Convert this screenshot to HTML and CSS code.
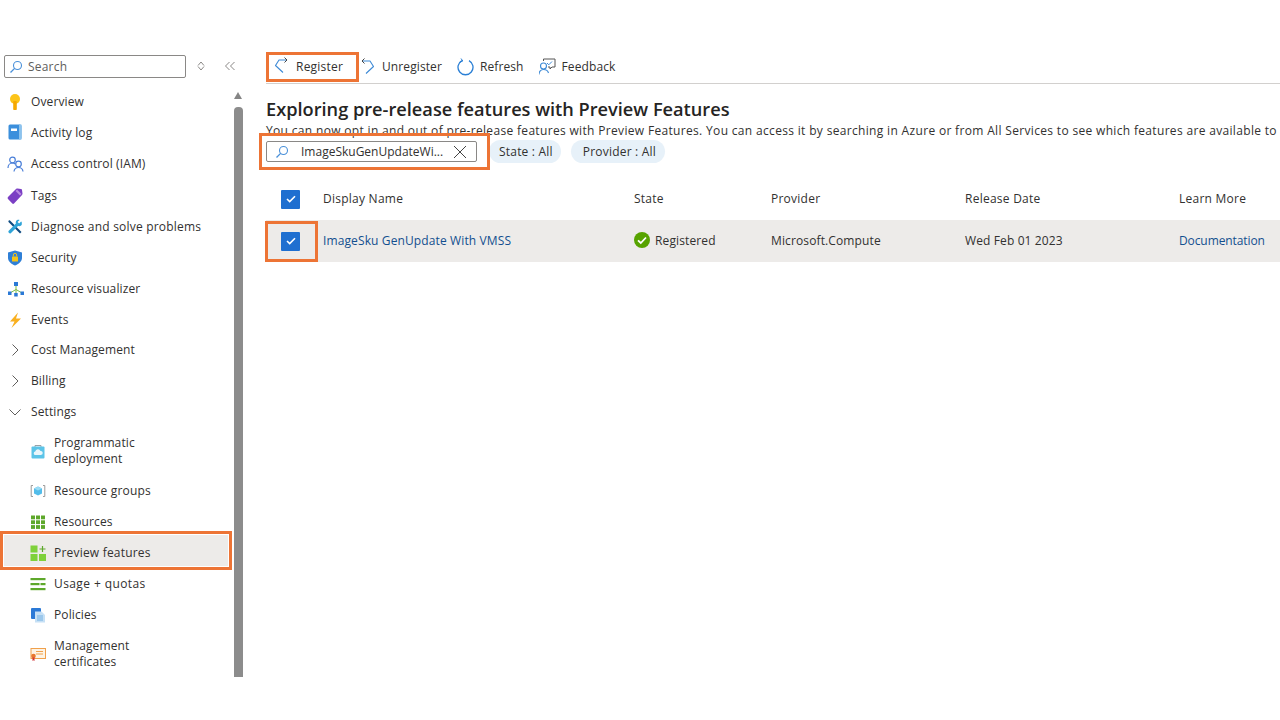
FILE: index.html
```html
<!DOCTYPE html>
<html lang="en">
<head>
<meta charset="utf-8">
<title>Preview features</title>
<link rel="stylesheet" href="styles.css">
</head>
<body>
<div class="page">
  <aside class="sidebar">
    <div class="side-list">
      <div class="side-top">
        <div class="side-search">
          <svg class="i14" viewBox="0 0 14 14"><circle cx="8.5" cy="5.5" r="4" fill="none" stroke="#4a90d9" stroke-width="1.1"/><path d="M5.6 8.4 1.5 12.5" stroke="#4a90d9" stroke-width="1.3"/></svg>
          <span>Search</span>
        </div>
        <svg class="updown" viewBox="0 0 10 12"><path d="M5 2 8 5.500 M5 2 2 5.500M5 10 8 6.500M5 10 2 6.500" fill="none" stroke="#8a8886" stroke-width="1"/></svg>
        <svg class="collapse" viewBox="0 0 12 10"><path d="M5.500 1 1.500 5l4 4M10.500 1l-4 4 4 4" fill="none" stroke="#8a8886" stroke-width="1"/></svg>
      </div>
      <nav class="menu">
        <a class="item"><svg class="ico" viewBox="0 0 16 16"><circle cx="8" cy="5" r="5" fill="#fcc419"/><rect x="6.200" y="7" width="3.600" height="9" rx=".8" fill="#f5a800"/></svg>Overview</a>
        <a class="item"><svg class="ico big" viewBox="0 0 16 16"><rect x="1.500" y="0.500" width="13" height="15" rx="1.500" fill="#3b8fdc"/><rect x="12" y="0.500" width="2.500" height="15" fill="#8cc3ee"/><rect x="4" y="4.500" width="6" height="2.500" fill="#fff"/></svg>Activity log</a>
        <a class="item"><svg class="ico ico-l" viewBox="0 0 18 16"><circle cx="5.500" cy="4" r="2.800" fill="none" stroke="#4a7fd8" stroke-width="1.200"/><path d="M1 12c0-3 2-5 4.500-5 1 0 2 .3 2.700 1" fill="none" stroke="#4a7fd8" stroke-width="1.200"/><circle cx="11.500" cy="8" r="2.800" fill="none" stroke="#4a7fd8" stroke-width="1.200"/><path d="M7 15.500c.3-2.500 2-4 4.500-4s4.200 1.500 4.500 4" fill="none" stroke="#4a7fd8" stroke-width="1.200"/></svg>Access control (IAM)</a>
        <a class="item nudge"><svg class="ico" viewBox="0 0 16 16"><path d="M1 9 9 1c.5-.4 1-.5 1.500-.5l3.500.5c.6.1 1 .5 1 1.100l.5 3.500c0 .6-.1 1-.5 1.400L7 15.500c-.5.500-1.200.500-1.700 0L1 11c-.5-.5-.5-1.500 0-2z" fill="#7b3fc4"/><path d="M10 1.500l4.500 4.500-1.500 1.500-4.500-4.500z" fill="#b98ae0"/></svg>Tags</a>
        <a class="item nudge wide"><svg class="ico" viewBox="0 0 16 16"><path d="M3 1.500 14.500 13 13 14.500 1.500 3c-.5-1 .5-2 1.500-1.500z" fill="#0f4c81"/><path d="M14.800 3.500c-.2-.6-.4-.8-.7-.9l-2 2-1.500-1.500 2-2c-1.500-.6-3 0-3.600 1.200-.4.800-.3 1.500-.1 2.200L1.500 12c-.5.800.2 2.500 2 2.500L11 7c1.800.5 3.300-.2 3.800-1.500z" fill="#2fa4d8"/></svg>Diagnose and solve problems</a>
        <a class="item nudge"><svg class="ico" viewBox="0 0 16 16"><path d="M8 .5 15 2.500V8c0 3.500-3.500 6-7 7.500C4.500 14 1 11.500 1 8V2.500z" fill="#2f7fd6"/><rect x="5" y="6.500" width="6" height="5" rx=".6" fill="#f5c518"/><path d="M6.300 6.500V5a1.700 1.700 0 0 1 3.400 0v1.500" fill="none" stroke="#f5c518" stroke-width="1"/></svg>Security</a>
        <a class="item nudge"><svg class="ico ico-l" viewBox="0 0 18 16"><path d="M9 5v8M9 8.500 3 12M9 8.500l6 3.500" stroke="#7cbb42" stroke-width="1" fill="none"/><rect x="7" y="1" width="4" height="4" fill="#2b79d6"/><rect x="1" y="10.500" width="3.500" height="3.500" fill="#2b79d6"/><rect x="7.200" y="12" width="3.500" height="3.500" fill="#2b79d6"/><rect x="13.500" y="10.500" width="3.500" height="3.500" fill="#2b79d6"/></svg>Resource visualizer</a>
        <a class="item nudge"><svg class="ico" viewBox="0 0 16 16"><path d="M11 .5 3 9.500h4.500L4.500 16 14 6.500H9z" fill="#f9b020"/></svg>Events</a>
        <a class="item"><svg class="ico chev" viewBox="0 0 16 16"><path d="M5.500 2.500 11 8l-5.500 5.500" fill="none" stroke="#605e5c" stroke-width="1"/></svg>Cost Management</a>
        <a class="item"><svg class="ico chev" viewBox="0 0 16 16"><path d="M5.500 2.500 11 8l-5.500 5.500" fill="none" stroke="#605e5c" stroke-width="1"/></svg>Billing</a>
        <a class="item"><svg class="ico chev" viewBox="0 0 16 16"><path d="M2.500 5.500 8 11l5.500-5.500" fill="none" stroke="#605e5c" stroke-width="1"/></svg>Settings</a>
        <a class="item sub two"><svg class="ico" viewBox="0 0 16 16"><path d="M5 4V2.500h6V4" fill="none" stroke="#9aa0a6" stroke-width="1"/><rect x="1.500" y="3.500" width="13" height="12" rx="1" fill="#5cc4e8"/><path d="M5 12a1.800 1.800 0 0 1 .2-3.500A2.800 2.800 0 0 1 10.500 8a2 2 0 0 1 .5 4z" fill="#eaf6fb"/></svg><span>Programmatic<br>deployment</span></a>
        <a class="item sub wide"><svg class="ico" viewBox="0 0 16 16"><path d="M3 2.500H1.200v11H3M13 2.500h1.800v11H13" fill="none" stroke="#9a9a9a" stroke-width="1"/><path d="M8 3.500 12 5.500v5L8 12.500l-4-2v-5z" fill="#53bdea"/><path d="M8 3.500 12 5.500 8 7.500 4 5.500z" fill="#9adcf5"/></svg>Resource groups</a>
        <a class="item sub"><svg class="ico" viewBox="0 0 16 16"><g fill="#5ea82b"><rect x="1" y="1.500" width="4" height="3.800"/><rect x="6" y="1.500" width="4" height="3.800"/><rect x="11" y="1.500" width="4" height="3.800"/><rect x="1" y="6.300" width="4" height="3.800"/><rect x="6" y="6.300" width="4" height="3.800"/><rect x="11" y="6.300" width="4" height="3.800"/><rect x="1" y="11.100" width="4" height="3.800"/><rect x="6" y="11.100" width="4" height="3.800"/><rect x="11" y="11.100" width="4" height="3.800"/></g></svg>Resources</a>
        <a class="item sub wide selected"><svg class="ico" viewBox="0 0 16 16"><g fill="#7fd13b"><rect x="0.500" y="0.500" width="7" height="7"/><rect x="0.500" y="9" width="7" height="7"/><rect x="9" y="9" width="7" height="7"/></g><path d="M12.500 1v6M9.500 4h6" stroke="#5ea82b" stroke-width="1.200"/></svg>Preview features</a>
        <a class="item sub wider"><svg class="ico" viewBox="0 0 16 16"><g fill="#5ea82b"><rect x="0.500" y="2" width="15" height="2.200"/><rect x="0.500" y="7" width="9" height="2.200"/><rect x="10.500" y="7" width="5" height="2.200"/><rect x="0.500" y="12" width="15" height="2.200"/></g></svg>Usage + quotas</a>
        <a class="item sub"><svg class="ico" viewBox="0 0 16 16"><rect x="1" y="1" width="10" height="11" rx="1" fill="#2b79d6"/><path d="M5 4.500h6.500L15 8v7.500H5z" fill="#c6e0f5"/><path d="M7 9h6M7 11h6M7 13h6" stroke="#5ea4de" stroke-width=".8"/></svg>Policies</a>
        <a class="item sub two"><svg class="ico" viewBox="0 0 16 16"><rect x="1" y="2.500" width="14.500" height="10" fill="#fdf3e4" stroke="#f0a04b" stroke-width="1"/><path d="M6 5.500h7M6 8h7" stroke="#f0a04b" stroke-width="1"/><circle cx="3.500" cy="10" r="2.300" fill="#e8772e"/><path d="M2.500 11.500v3.500l1-.8 1 .8v-3.500" fill="#d13438"/></svg><span>Management<br>certificates</span></a>
      </nav>
    </div>
    <div class="scrollbar">
      <div class="arrow"></div>
      <div class="thumb"></div>
    </div>
  </aside>
  <main class="main">
    <div class="toolbar">
      <button class="cmd first"><svg class="i18" viewBox="0 0 18 18"><path d="M12.500 3H5L1.500 8.500 9 15.500" fill="none" stroke="#3d8ad6" stroke-width="1.100" stroke-linejoin="round"/><path d="M10.500 .5 13 3l-2.500 2.500" fill="none" stroke="#444" stroke-width="1"/></svg>Register</button>
      <button class="cmd"><svg class="i18" viewBox="0 0 18 18"><path d="M3.500 3H11l3.500 5.500L7 15.500" fill="none" stroke="#3d8ad6" stroke-width="1.100" stroke-linejoin="round"/><path d="M5.500 .5 3 3l2.500 2.500" fill="none" stroke="#444" stroke-width="1"/></svg>Unregister</button>
      <button class="cmd"><svg class="i18" viewBox="0 0 18 18"><path d="M5 2.600A7.500 7.500 0 1 0 12 2.600" fill="none" stroke="#2a7fd5" stroke-width="1.300"/><path d="M4 .5l1.800 2.500-2.800 1" fill="none" stroke="#2a7fd5" stroke-width="1"/></svg>Refresh</button>
      <button class="cmd"><svg class="i18" viewBox="0 0 18 18"><circle cx="4.500" cy="8" r="3" fill="none" stroke="#3d8ad6" stroke-width="1.100"/><path d="M0 16.500c0-3 1.800-5 4.500-5s4.500 1.500 5 3.500" fill="none" stroke="#3d8ad6" stroke-width="1.100"/><path d="M4.500 3V1h11.500v8h-3l-2 2V9h-2" fill="none" stroke="#555" stroke-width="1"/><path d="m8 5 1.800 1.800L13 3.500" fill="none" stroke="#3d8ad6" stroke-width="1"/></svg>Feedback</button>
    </div>
    <div class="content">
      <h1 class="title">Exploring pre-release features with Preview Features</h1>
      <p class="desc">You can now opt in and out of pre-release features with Preview Features. You can access it by searching in Azure or from All Services to see which features are available to</p>
      <div class="filters">
        <div class="filter-search">
          <svg class="i14" viewBox="0 0 14 14"><circle cx="8.500" cy="5.500" r="4" fill="none" stroke="#4a90d9" stroke-width="1.100"/><path d="M5.600 8.400 1.500 12.500" stroke="#4a90d9" stroke-width="1.300"/></svg>
          <span class="filter-text">ImageSkuGenUpdateWi...</span>
          <svg class="close" viewBox="0 0 14 14"><path d="M1 1l12 12M13 1 1 13" stroke="#444" stroke-width="1"/></svg>
        </div>
        <span class="pill">State : All</span>
        <span class="pill">Provider : All</span>
      </div>
      <div class="row head">
        <div class="c-check"><span class="check"><svg viewBox="0 0 10 8"><path d="M1 4l2.700 2.600L9 1.200" fill="none" stroke="#fff" stroke-width="1.600"/></svg></span></div>
        <div class="cell">Display Name</div>
        <div class="cell">State</div>
        <div class="cell">Provider</div>
        <div class="cell">Release Date</div>
        <div class="cell">Learn More</div>
      </div>
      <div class="row body">
        <div class="c-check marked"><span class="check"><svg viewBox="0 0 10 8"><path d="M1 4l2.700 2.600L9 1.200" fill="none" stroke="#fff" stroke-width="1.600"/></svg></span></div>
        <div class="cell"><a class="link">ImageSku GenUpdate With VMSS</a></div>
        <div class="cell status"><svg class="ok" viewBox="0 0 16 16"><circle cx="8" cy="8" r="8" fill="#57a300"/><path d="M4 8.300l2.800 2.700L12 5.500" fill="none" stroke="#fff" stroke-width="1.800"/></svg>Registered</div>
        <div class="cell">Microsoft.Compute</div>
        <div class="cell">Wed Feb 01 2023</div>
        <div class="cell"><a class="link doc">Documentation</a></div>
      </div>
    </div>
  </main>
</div>
</body>
</html>
```
FILE: styles.css
```css
* { box-sizing: border-box; }
html, body { margin: 0; height: 100%; background: #fff; overflow: hidden; }
body { font-family: "Open Sans", "Noto Sans", sans-serif; font-size: 12px; color: #323130; }
svg { display: block; flex: none; }
.page { display: flex; width: 1280px; height: 677px; padding-top: 52px; }

.sidebar { width: 244px; flex: none; display: flex; height: 625px; }
.side-list { width: 234px; flex: none; }
.side-top { display: flex; height: 30px; padding: 3px 0 0 4px; align-items: flex-start; }
.side-search { width: 182px; height: 23px; flex: none; border: 1px solid #8a8886; border-radius: 2px; display: flex; align-items: center; gap: 5px; padding-left: 4px; color: #605e5c; letter-spacing: .2px; }
.i14 { width: 14px; height: 14px; }
.updown { width: 10px; height: 12px; margin: 5px 0 0 10px; }
.collapse { width: 12px; height: 10px; margin: 6px 0 0 18px; }
.menu { display: flex; flex-direction: column; padding-top: 4px; }
.item { display: flex; align-items: center; height: 31px; padding-left: 7px; gap: 8px; color: #323130; white-space: nowrap; letter-spacing: .12px; position: relative; }
.nudge { padding-top: 2px; }
.wide { letter-spacing: .2px; }
.wider { letter-spacing: .4px; }
.ico { width: 16px; height: 16px; }
.ico-l { width: 18px; height: 16px; margin-right: -2px; }
.big { margin-top: -1px; }
.sub { padding-left: 30px; gap: 8px; }
.two { height: 48px; line-height: 16.500px; }
.selected { isolation: isolate; }
.selected::after { content: ""; position: absolute; z-index: -1; left: 0; right: 2px; top: -6px; bottom: -2px; border: 3px solid #ed7435; background: #edebe9; box-shadow: inset 0 0 0 1px #fff; }

.scrollbar { width: 10px; flex: none; margin-top: 40px; display: flex; flex-direction: column; align-items: flex-start; }
.arrow { width: 0; height: 0; border: 4.500px solid transparent; border-top: 0; border-bottom: 7px solid #858585; }
.thumb { width: 9px; flex: 1; margin-top: 8px; border-radius: 4px 4px 0 0; background: #8c8c8c; }

.main { flex: 1; min-width: 0; padding-left: 22px; overflow: hidden; }
.toolbar { display: flex; align-items: flex-start; height: 32px; border-bottom: 1px solid #d2d0ce; }
.cmd { display: flex; align-items: center; gap: 5px; height: 29px; margin: 0 15px 0 0; padding: 0; border: 0; background: none; font: inherit; letter-spacing: .1px; color: #323130; }
.i18 { width: 18px; height: 18px; }
.first { width: 93px; height: 30px; gap: 4px; margin-right: 0; border: 3px solid #ed7435; padding: 0 0 2px 5px; letter-spacing: .22px; }
.content { padding-top: 13px; }
.title { margin: 0; font-size: 18.200px; line-height: 24px; font-weight: 600; color: #252423; white-space: nowrap; }
.desc { margin: 0; line-height: 20px; height: 16px; white-space: nowrap; letter-spacing: .33px; }
.filters { display: flex; align-items: center; gap: 10px; height: 23px; margin-top: 3px; }
.filter-search { position: relative; width: 211px; height: 21px; flex: none; border: 1px solid #8a8886; border-radius: 2px; display: flex; align-items: center; padding: 0 8px; background: #fff; margin-right: 2px; }
.filter-search::after { content: ""; position: absolute; left: -8px; top: -9px; right: -14px; bottom: -9px; border: 3px solid #ed7435; pointer-events: none; }
.filter-text { flex: 1; padding-left: 12px; white-space: nowrap; }
.close { width: 14px; height: 14px; margin-right: 1px; }
.pill { display: flex; align-items: center; height: 23px; padding: 0 8px 0 10px; border-radius: 12px; background: #e7f1f9; white-space: nowrap; letter-spacing: .2px; }
.pill + .pill { padding: 0 9px 0 12px; }

.row { display: grid; grid-template-columns: 57px 311px 137px 194px 214px 1fr; align-items: center; width: 1014px; letter-spacing: .12px; }
.head { height: 42px; margin-top: 15px; letter-spacing: .25px; }
.body { height: 42px; background: #edebe9; }
.cell { padding-bottom: 2px; }
.c-check { display: flex; justify-content: center; align-items: center; height: 100%; position: relative; width: 49px; }
.marked::after { content: ""; position: absolute; left: -1px; top: 1px; right: -3px; bottom: 0; border: 3px solid #ed7435; }
.check { width: 19px; height: 19px; background: #1f6fd0; border-radius: 1px; display: flex; align-items: center; justify-content: center; }
.check svg { width: 10px; height: 8px; }
.link { color: #134f8f; }
.doc { letter-spacing: -.1px; }
.status { display: flex; align-items: center; gap: 5px; }
.ok { width: 16px; height: 16px; }
```
